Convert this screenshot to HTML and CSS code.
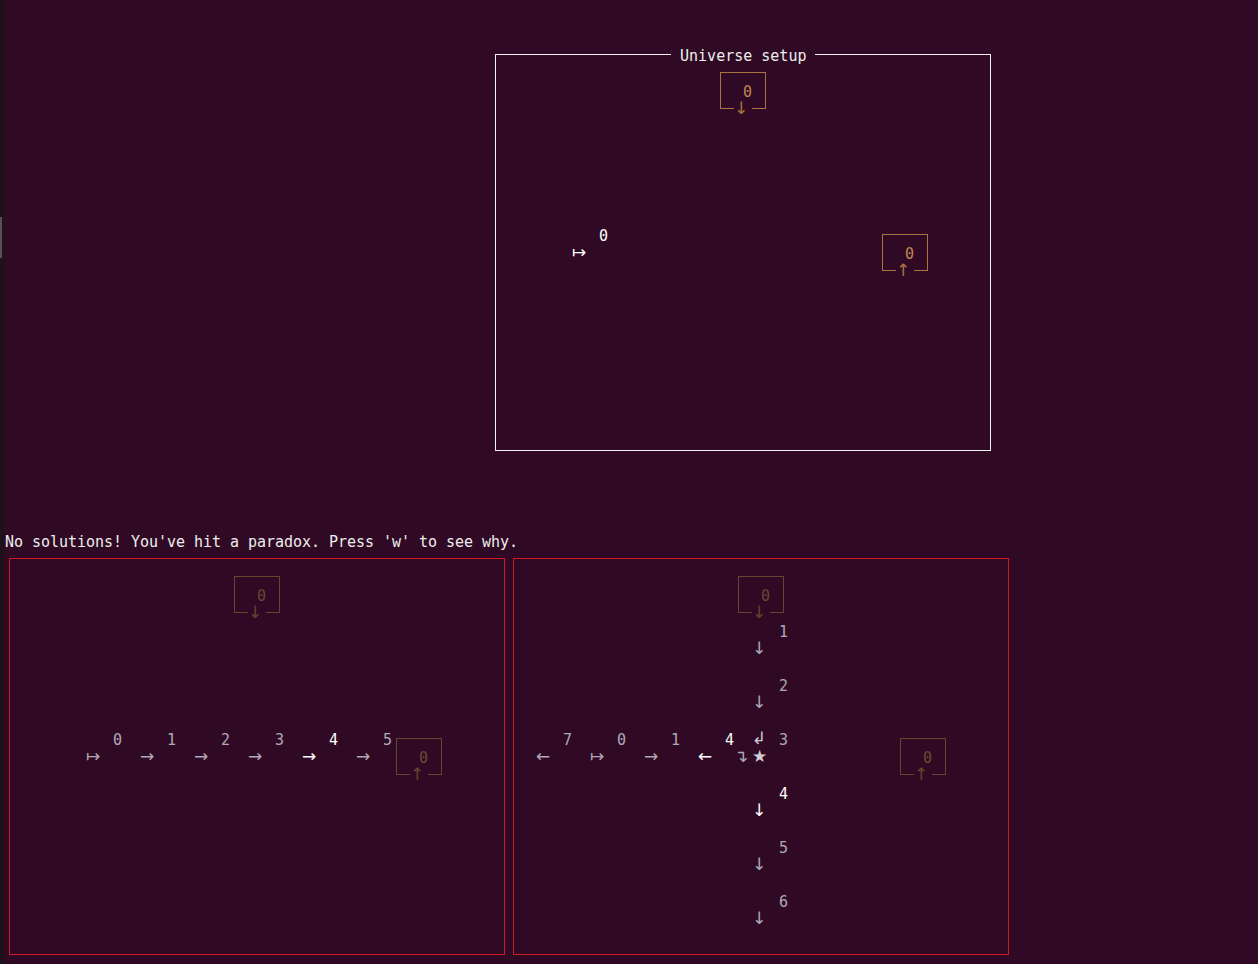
FILE: index.html
```html
<!DOCTYPE html>
<html>
<head>
<meta charset="utf-8">
<title>Universe setup</title>
<link rel="stylesheet" href="styles.css">
</head>
<body>
<div class="strip"><div class="strip-mark"></div></div>
<div class="screen">

  <section class="panel panel-white universe">
    <div class="title" style="--r:1;--c:21">&nbsp;Universe setup&nbsp;</div>
    <div class="box box-gold" style="--r:2;--c:26">
      <span class="box-zero">0</span>
      <span class="box-arrow arrow">↓</span>
    </div>
    <span class="ch hi" style="--r:11;--c:13">0</span>
    <span class="ch hi arrow" style="--r:12;--c:10">↦</span>
    <div class="box box-gold" style="--r:11;--c:44">
      <span class="box-zero">0</span>
      <span class="box-arrow arrow">↑</span>
    </div>
  </section>

  <div class="message">No solutions! You've hit a paradox. Press 'w' to see why.</div>

  <section class="panel panel-red left">
    <div class="box box-dim" style="--r:2;--c:26">
      <span class="box-zero">0</span>
      <span class="box-arrow arrow">↓</span>
    </div>
    <span class="ch" style="--r:11;--c:13">0</span>
    <span class="ch" style="--r:11;--c:19">1</span>
    <span class="ch" style="--r:11;--c:25">2</span>
    <span class="ch" style="--r:11;--c:31">3</span>
    <span class="ch hi" style="--r:11;--c:37">4</span>
    <span class="ch" style="--r:11;--c:43">5</span>
    <span class="ch arrow" style="--r:12;--c:10">↦</span>
    <span class="ch arrow" style="--r:12;--c:16">→</span>
    <span class="ch arrow" style="--r:12;--c:22">→</span>
    <span class="ch arrow" style="--r:12;--c:28">→</span>
    <span class="ch arrow hi" style="--r:12;--c:34">→</span>
    <span class="ch arrow" style="--r:12;--c:40">→</span>
    <div class="box box-dim" style="--r:11;--c:44">
      <span class="box-zero">0</span>
      <span class="box-arrow arrow">↑</span>
    </div>
  </section>

  <section class="panel panel-red right">
    <div class="box box-dim" style="--r:2;--c:26">
      <span class="box-zero">0</span>
      <span class="box-arrow arrow">↓</span>
    </div>
    <span class="ch" style="--r:5;--c:31">1</span>
    <span class="ch arrow" style="--r:6;--c:28">↓</span>
    <span class="ch" style="--r:8;--c:31">2</span>
    <span class="ch arrow" style="--r:9;--c:28">↓</span>
    <span class="ch" style="--r:11;--c:7">7</span>
    <span class="ch" style="--r:11;--c:13">0</span>
    <span class="ch" style="--r:11;--c:19">1</span>
    <span class="ch hi" style="--r:11;--c:25">4</span>
    <span class="ch arrow soft" style="--r:11;--c:28">↲</span>
    <span class="ch" style="--r:11;--c:31">3</span>
    <span class="ch arrow" style="--r:12;--c:4">←</span>
    <span class="ch arrow" style="--r:12;--c:10">↦</span>
    <span class="ch arrow" style="--r:12;--c:16">→</span>
    <span class="ch arrow hi" style="--r:12;--c:22">←</span>
    <span class="ch arrow" style="--r:12;--c:26">↴</span>
    <span class="ch arrow soft" style="--r:12;--c:28">★</span>
    <span class="ch hi" style="--r:14;--c:31">4</span>
    <span class="ch arrow hi" style="--r:15;--c:28">↓</span>
    <span class="ch" style="--r:17;--c:31">5</span>
    <span class="ch arrow" style="--r:18;--c:28">↓</span>
    <span class="ch" style="--r:20;--c:31">6</span>
    <span class="ch arrow" style="--r:21;--c:28">↓</span>
    <div class="box box-dim" style="--r:11;--c:44">
      <span class="box-zero">0</span>
      <span class="box-arrow arrow">↑</span>
    </div>
  </section>

</div>
</body>
</html>
```

FILE: styles.css
```css
html, body {
  margin: 0;
  padding: 0;
  height: 964px;
  overflow: hidden;
  background: #300a24;
}

body {
  display: flex;
  font-family: "DejaVu Sans Mono", monospace;
  font-size: 15px;
  line-height: 20px;
  color: #b0a8b6;
}

.strip {
  width: 4px;
  flex: none;
  background: #1d1219;
  display: flex;
  flex-direction: column;
}

.strip-mark {
  margin-top: 217px;
  width: 2px;
  height: 41px;
  background: #5e4c58;
}

.screen {
  flex: 1;
  padding: 10px 0 0 1px;
  display: grid;
  grid-template-columns: repeat(139, 9px);
  grid-template-rows: repeat(53, 18px);
}

.panel {
  position: relative;
  display: grid;
  grid-template-columns: repeat(56, 9px);
  grid-template-rows: repeat(23, 18px);
}

.panel::before {
  content: "";
  position: absolute;
  top: 8px;
  left: 4px;
  right: 4px;
  bottom: 9px;
  border: 1px solid;
}

.panel-white::before { border-color: #f2f2f2; }
.panel-red::before { border-color: #d01b24; }

.universe { grid-row: 3 / span 23; grid-column: 55 / span 56; }
.left { grid-row: 31 / span 23; grid-column: 1 / span 56; }
.right { grid-row: 31 / span 23; grid-column: 57 / span 56; }

.message {
  grid-row: 30;
  grid-column: 1 / span 70;
  color: #eeeeec;
  white-space: pre;
  letter-spacing: -0.03px;
}

.title {
  position: relative;
  grid-row: var(--r);
  grid-column: var(--c) / span 16;
  height: 18px;
  background: #300a24;
  color: #eeeeec;
  white-space: pre;
}

.ch {
  position: relative;
  grid-row: var(--r);
  grid-column: var(--c);
  white-space: pre;
  overflow: visible;
}

.arrow {
  font-family: "DejaVu Sans", sans-serif;
  font-size: 17px;
  line-height: 17px;
}

.hi { color: #ffffff; }
.soft { color: #d2cad6; }

.box {
  position: relative;
  grid-row: var(--r) / span 3;
  grid-column: var(--c) / span 6;
  display: grid;
  grid-template-columns: repeat(6, 9px);
  grid-template-rows: repeat(3, 18px);
}

.box::before {
  content: "";
  position: absolute;
  top: 8px;
  left: 4px;
  right: 4px;
  bottom: 9px;
  border: 1px solid currentColor;
}

.box-gold { color: #a8733f; }
.box-gold .box-zero { color: #bd8550; }
.box-dim { color: #654530; }
.box-dim .box-zero { color: #6c4733; }

.box-zero {
  position: relative;
  grid-row: 2;
  grid-column: 4;
}

.box-arrow {
  position: relative;
  grid-row: 3;
  grid-column: 3 / span 2;
  height: 18px;
  background: #300a24;
  white-space: pre;
}
```
